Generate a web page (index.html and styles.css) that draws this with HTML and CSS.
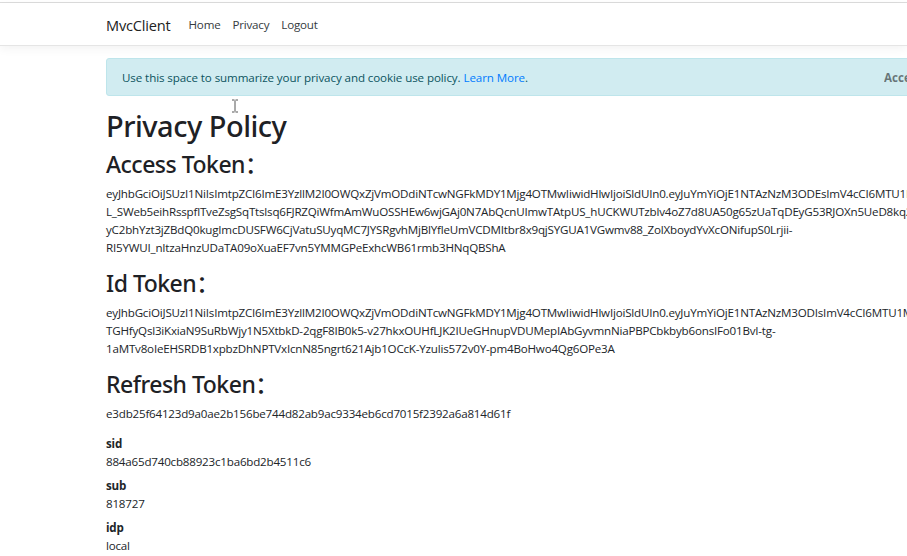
FILE: index.html
```html
<!DOCTYPE html>
<html lang="en">
<head>
<meta charset="utf-8">
<title>Privacy Policy - MvcClient</title>
<link rel="stylesheet" href="styles.css">
</head>
<body>
<div class="topline"></div>
<header class="navbar">
  <div class="container nav-inner">
    <a class="brand" href="#">MvcClient</a>
    <ul class="nav">
      <li><a class="nav-link" href="#">Home</a></li>
      <li><a class="nav-link" href="#">Privacy</a></li>
      <li><a class="nav-link" href="#">Logout</a></li>
    </ul>
  </div>
</header>
<div class="container">
  <div class="alert">
    <span>Use this space to summarize your privacy and cookie use policy. <a href="#">Learn More</a>.</span>
    <button class="accept" type="button">Accept</button>
  </div>
  <main>
    <h1>Privacy Policy</h1>
    <h2>Access Token：</h2>
    <p class="token">eyJhbGciOiJSUzI1NiIsImtpZCI6ImE3YzllM2I0OWQxZjVmODdiNTcwNGFkMDY1Mjg4OTMwIiwidHlwIjoiSldUIn0.eyJuYmYiOjE1NTAzNzM3ODEsImV4cCI6MTU1MDM3NzM4MSwiaXNzIjoiaHR0cDovL2xvY2FsaG9zdDo1MDAwIiwiYXVkIjpb-<br>L_SWeb5eihRsspflTveZsgSqTtslsq6FJRZQiWfmAmWuOSSHEw6wjGAj0N7AbQcnUImwTAtpUS_hUCKWUTzblv4oZ7d8UA50g65zUaTqDEyG53RJOXn5UeD8kq2Hn-<br>yC2bhYzt3jZBdQ0kugImcDUSFW6CjVatuSUyqMC7JYSRgvhMjBlYfleUmVCDMItbr8x9qjSYGUA1VGwmv88_ZolXboydYvXcONifupS0Lrjii-<br>RI5YWUI_nItzaHnzUDaTA09oXuaEF7vn5YMMGPeExhcWB61rmb3HNqQBShA</p>
    <h2>Id Token：</h2>
    <p class="token">eyJhbGciOiJSUzI1NiIsImtpZCI6ImE3YzllM2I0OWQxZjVmODdiNTcwNGFkMDY1Mjg4OTMwIiwidHlwIjoiSldUIn0.eyJuYmYiOjE1NTAzNzM3ODIsImV4cCI6MTU1MDM3NDA4MiwiaXNzIjoiaHR0cDovL2xvY2FsaG9zdDo1MDAwIiwiYXVkIjoibXZj-<br>TGHfyQsl3iKxiaN9SuRbWjy1N5XtbkD-2qgF8IB0k5-v27hkxOUHfLJK2IUeGHnupVDUMepIAbGyvmnNiaPBPCbkbyb6onsIFo01BvI-tg-<br>1aMTv8oIeEHSRDB1xpbzDhNPTVxIcnN85ngrt621Ajb1OCcK-Yzulis572v0Y-pm4BoHwo4Qg6OPe3A</p>
    <h2>Refresh Token：</h2>
    <p>e3db25f64123d9a0ae2b156be744d82ab9ac9334eb6cd7015f2392a6a814d61f</p>
    <dl>
      <dt>sid</dt>
      <dd>884a65d740cb88923c1ba6bd2b4511c6</dd>
      <dt>sub</dt>
      <dd>818727</dd>
      <dt>idp</dt>
      <dd>local</dd>
    </dl>
  </main>
</div>
<svg class="cursor" width="8" height="14" viewBox="0 0 8 14" aria-hidden="true">
  <path d="M1 1h2.5M4.5 1H7M4 1.5v11M1 13h2.5M4.5 13H7" stroke="#555" stroke-width="1" fill="none"/>
</svg>
</body>
</html>
```
FILE: styles.css
```css
html, body {
  margin: 0;
  padding: 0;
}
body {
  font-family: "Open Sans", "Noto Sans", "Liberation Sans", sans-serif;
  font-size: 11.6px;
  letter-spacing: -0.2px;
  line-height: 18px;
  color: #212529;
  background: #fff;
  overflow: hidden;
  width: 907px;
  height: 556px;
  position: relative;
}
.topline {
  height: 2px;
  background: #fff;
  border-bottom: 1px solid #dcdcdc;
}
.container {
  width: 832px;
  margin-left: 95px;
  padding: 0 11px;
}
.navbar {
  background: #fff;
  border-bottom: 1px solid #e5e5e5;
  box-shadow: 0 3px 9px rgba(0, 0, 0, 0.05);
  padding: 6px 0;
  margin-bottom: 12px;
}
.nav-inner {
  display: flex;
  align-items: center;
}
.brand {
  font-size: 14.6px;
  line-height: 22px;
  padding: 5px 0 3px;
  margin-right: 12px;
  color: #222;
  text-decoration: none;
}
.nav {
  display: flex;
  list-style: none;
  margin: 0;
  padding: 0;
}
.nav-link {
  display: block;
  padding: 7px 6px 5px;
  color: #343a40;
  text-decoration: none;
}
.alert {
  position: relative;
  background: #d1ecf1;
  border: 1px solid #bee5eb;
  border-radius: 3px;
  color: #0c5460;
  padding: 10px 15px 8px;
  margin-bottom: 12px;
  letter-spacing: -0.1px;
}
.alert a {
  color: #007bff;
  text-decoration: none;
}
.accept {
  position: absolute;
  top: 0;
  left: 777px;
  padding: 10px 0 8px;
  background: none;
  border: 0;
  font: inherit;
  font-weight: 700;
  line-height: 18px;
  color: #000;
  opacity: 0.5;
}
h1, h2 {
  font-family: "Noto Sans", "Open Sans", "Noto Sans CJK SC", sans-serif;
  font-weight: 500;
  margin: 0 0 6px;
  color: #1e2125;
}
h1 {
  font-size: 29px;
  letter-spacing: -0.5px;
  line-height: 36px;
}
h2 {
  font-size: 23px;
  letter-spacing: -0.5px;
  line-height: 29px;
}
p {
  margin: 0 0 12px;
}
.token {
  white-space: nowrap;
}
dl {
  margin: 0;
}
dt {
  font-weight: 700;
}
dd {
  margin: 0 0 6px;
}
.cursor {
  position: absolute;
  left: 231px;
  top: 99px;
}
```
